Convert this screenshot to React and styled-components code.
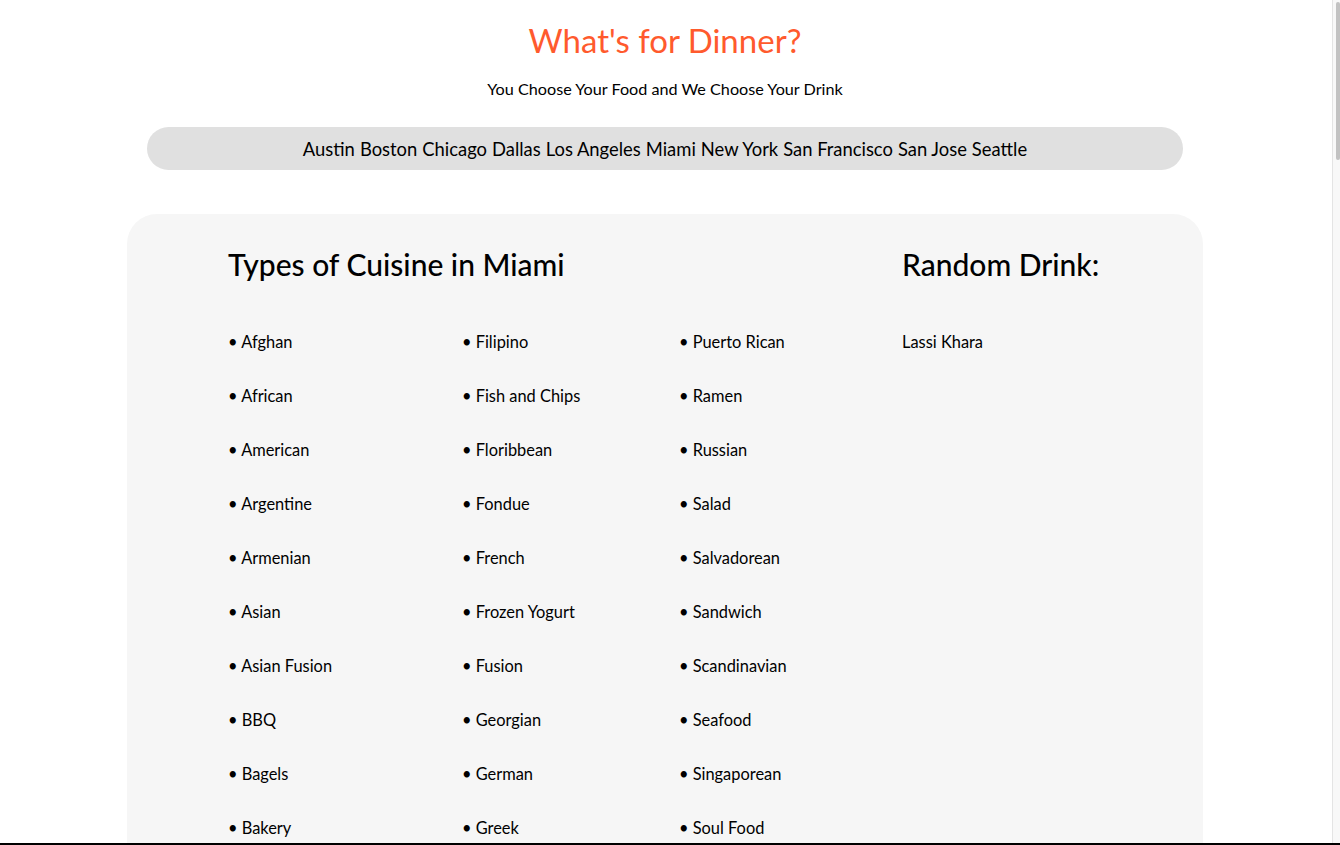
import React from 'react';
import styled, { createGlobalStyle } from 'styled-components';

const cities = ['Austin', 'Boston', 'Chicago', 'Dallas', 'Los Angeles', 'Miami', 'New York', 'San Francisco', 'San Jose', 'Seattle'];

const columns = [
  ['Afghan', 'African', 'American', 'Argentine', 'Armenian', 'Asian', 'Asian Fusion', 'BBQ', 'Bagels', 'Bakery',
    'Bar Food', 'Brazilian', 'Breakfast', 'Brunch', 'Burgers', 'Burmese', 'Cafe', 'Cajun', 'Californian', 'Cambodian',
    'Caribbean', 'Cheesesteaks', 'Chicken Wings', 'Chinese', 'Coffee', 'Colombian', 'Comfort Food', 'Creperies', 'Cuban', 'Deli',
    'Desserts', 'Dim Sum', 'Diner', 'Donuts', 'Eastern European', 'Ecuadorian', 'Ethiopian', 'Falafel'],
  ['Filipino', 'Fish and Chips', 'Floribbean', 'Fondue', 'French', 'Frozen Yogurt', 'Fusion', 'Georgian', 'German', 'Greek',
    'Halal', 'Hawaiian', 'Healthy', 'Hot Dogs', 'Ice Cream', 'Indian', 'Irish', 'Israeli', 'Italian', 'Jamaican',
    'Japanese', 'Juice Bar', 'Korean', 'Kosher', 'Latin American', 'Lebanese', 'Mediterranean', 'Mexican', 'Middle Eastern', 'Moroccan',
    'Noodles', 'Pakistani', 'Pasta', 'Persian', 'Peruvian', 'Pizza', 'Poke', 'Portuguese'],
  ['Puerto Rican', 'Ramen', 'Russian', 'Salad', 'Salvadorean', 'Sandwich', 'Scandinavian', 'Seafood', 'Singaporean', 'Soul Food',
    'Soup', 'South American', 'Southern', 'Spanish', 'Steakhouse', 'Sushi', 'Tacos', 'Tapas', 'Tex-Mex', 'Thai',
    'Turkish', 'Vegan', 'Vegetarian', 'Venezuelan', 'Vietnamese', 'Wine Bar'],
];

const Global = createGlobalStyle`
  body {
    margin: 0;
    background: #ffffff;
    font-family: "Lato", "Noto Sans", sans-serif;
    color: #000000;
  }
`;

const Page = styled.div`
  display: flex;
  flex-direction: column;
  align-items: center;
  padding: 19px 10px 0 0;
`;

/* browser chrome seen in the capture: scroll track and bottom frame edge */
const ScrollTrack = styled.div`
  position: fixed;
  top: 0;
  right: 0;
  bottom: 0;
  width: 7px;
  background: #f8f8f8;
  border-left: 1px solid #e4e4e4;
`;

const ScrollThumb = styled.div`
  margin: 2px 0 0 3px;
  width: 4px;
  height: 158px;
  border-radius: 2px;
  background: #c2c2c2;
`;

const FrameEdge = styled.div`
  position: fixed;
  left: 0;
  right: 0;
  bottom: 0;
  height: 2px;
  background: #000000;
`;

const Title = styled.h1`
  margin: 0;
  font-size: 33px;
  font-weight: 400;
  color: #ff5a2d;
  line-height: 42px;
`;

const Subtitle = styled.p`
  margin: 18px 0 0;
  font-size: 16.2px;
  line-height: 20px;
`;

const CityBar = styled.nav`
  margin-top: 28px;
  width: 1036px;
  height: 43px;
  border-radius: 22px;
  background: #e0e0e0;
  display: flex;
  justify-content: center;
  align-items: center;
  gap: 5px;
  font-size: 18.4px;
`;

const City = styled.span`
  cursor: pointer;
`;

const Card = styled.main`
  margin-top: 44px;
  width: 1076px;
  box-sizing: border-box;
  background: #f6f6f6;
  border-radius: 30px;
  padding: 30px 100px 60px 101px;
  display: grid;
  grid-template-columns: 234px 217px 223px 1fr;
`;

const Heading = styled.h2`
  margin: 0;
  font-size: 30px;
  font-weight: 500;
  line-height: 40px;
  grid-column: ${p => p.$span};
`;

const List = styled.ul`
  list-style: none;
  margin: 0;
  padding: 0;
  padding-top: 48px;
`;

const Item = styled.li`
  font-size: 16.4px;
  line-height: 20px;
  margin-bottom: 34px;
  &::before { content: "• "; }
`;

const Drink = styled.p`
  margin: 0;
  padding-top: 48px;
  font-size: 16.4px;
  line-height: 20px;
`;

export default function App() {
  return (
    <>
      <Global />
      <Page>
        <Title>What's for Dinner?</Title>
        <Subtitle>You Choose Your Food and We Choose Your Drink</Subtitle>
        <CityBar>
          {cities.map(c => <City key={c}>{c}</City>)}
        </CityBar>
        <Card>
          <Heading $span="1 / 4">Types of Cuisine in Miami</Heading>
          <Heading $span="4 / 5">Random Drink:</Heading>
          {columns.map((col, i) => (
            <List key={i}>
              {col.map(c => <Item key={c}>{c}</Item>)}
            </List>
          ))}
          <Drink>Lassi Khara</Drink>
        </Card>
      </Page>
      <ScrollTrack><ScrollThumb /></ScrollTrack>
      <FrameEdge />
    </>
  );
}
